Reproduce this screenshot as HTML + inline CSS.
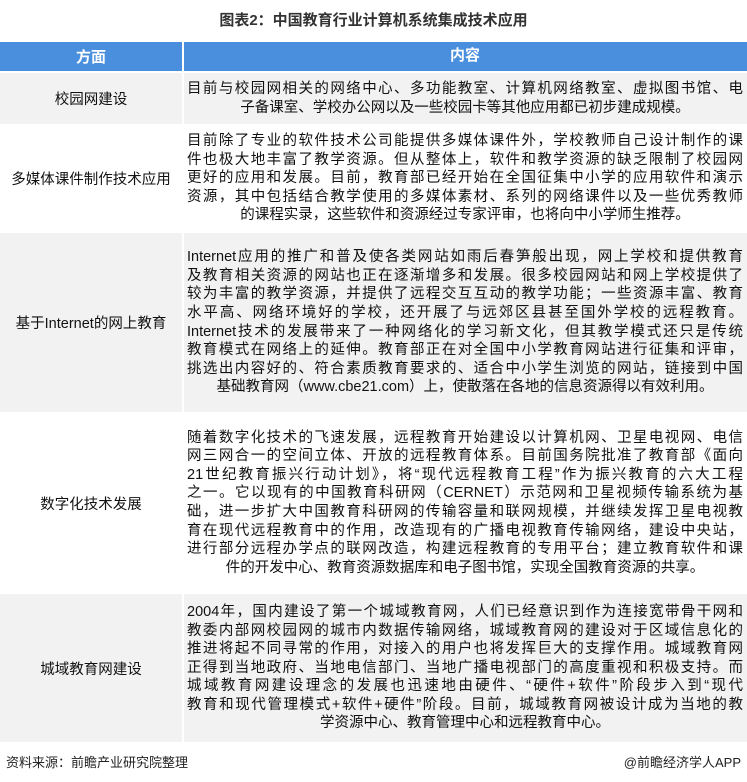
<!DOCTYPE html>
<html><head><meta charset="utf-8"><style>
*{margin:0;padding:0;box-sizing:border-box}
body{width:747px;height:782px;background:#fff;font-family:"Liberation Sans","Noto Sans CJK SC",sans-serif;color:#111;position:relative;overflow:hidden}
.title{position:absolute;top:9px;left:0;width:747px;text-align:center;font-size:15px;font-weight:bold;color:#333}
.row{position:absolute;left:0;width:747px;display:flex}
.l{width:182px;display:flex;align-items:center;justify-content:center;font-size:14.5px;text-align:center}
.r{position:absolute;left:184px;right:0;top:0;bottom:0;display:flex;flex-direction:column;justify-content:center;padding:0 4px 0 3px;font-size:14.5px;line-height:18.6px}
.r div{text-align:justify;text-align-last:justify;white-space:nowrap}
.r div.c{text-align:center;text-align-last:center}
.g .l,.g .r{background:#f2f2f2}
.hd .l,.hd .r{background:#4a8fdd;color:#fff;font-weight:bold;font-size:15px}
.hd .r{align-items:center}
.foot{position:absolute;top:752px;font-size:13px;color:#222}
</style></head><body>
<div class="title">图表2：中国教育行业计算机系统集成技术应用</div>

<div class="row hd" style="top:42px;height:29px"><div class="l">方面</div><div class="r">内容</div></div>

<div class="row g" style="top:73px;height:51px"><div class="l">校园网建设</div><div class="r">
<div>目前与校园网相关的网络中心、多功能教室、计算机网络教室、虚拟图书馆、电</div>
<div class="c">子备课室、学校办公网以及一些校园卡等其他应用都已初步建成规模。</div></div></div>

<div class="row" style="top:126px;height:105px"><div class="l">多媒体课件制作技术应用</div><div class="r">
<div>目前除了专业的软件技术公司能提供多媒体课件外，学校教师自己设计制作的课</div>
<div>件也极大地丰富了教学资源。但从整体上，软件和教学资源的缺乏限制了校园网</div>
<div>更好的应用和发展。目前，教育部已经开始在全国征集中小学的应用软件和演示</div>
<div>资源，其中包括结合教学使用的多媒体素材、系列的网络课件以及一些优秀教师</div>
<div class="c">的课程实录，这些软件和资源经过专家评审，也将向中小学师生推荐。</div></div></div>

<div class="row g" style="top:233px;height:179px"><div class="l">基于Internet的网上教育</div><div class="r">
<div>Internet应用的推广和普及使各类网站如雨后春笋般出现，网上学校和提供教育</div>
<div>及教育相关资源的网站也正在逐渐增多和发展。很多校园网站和网上学校提供了</div>
<div>较为丰富的教学资源，并提供了远程交互互动的教学功能；一些资源丰富、教育</div>
<div>水平高、网络环境好的学校，还开展了与远郊区县甚至国外学校的远程教育。</div>
<div>Internet技术的发展带来了一种网络化的学习新文化，但其教学模式还只是传统</div>
<div>教育模式在网络上的延伸。教育部正在对全国中小学教育网站进行征集和评审，</div>
<div>挑选出内容好的、符合素质教育要求的、适合中小学生浏览的网站，链接到中国</div>
<div class="c">基础教育网（www.cbe21.com）上，使散落在各地的信息资源得以有效利用。</div></div></div>

<div class="row" style="top:414px;height:178px"><div class="l">数字化技术发展</div><div class="r">
<div>随着数字化技术的飞速发展，远程教育开始建设以计算机网、卫星电视网、电信</div>
<div>网三网合一的空间立体、开放的远程教育体系。目前国务院批准了教育部《面向</div>
<div>21世纪教育振兴行动计划》，将“现代远程教育工程”作为振兴教育的六大工程</div>
<div>之一。它以现有的中国教育科研网（CERNET）示范网和卫星视频传输系统为基</div>
<div>础，进一步扩大中国教育科研网的传输容量和联网规模，并继续发挥卫星电视教</div>
<div>育在现代远程教育中的作用，改造现有的广播电视教育传输网络，建设中央站，</div>
<div>进行部分远程办学点的联网改造，构建远程教育的专用平台；建立教育软件和课</div>
<div class="c">件的开发中心、教育资源数据库和电子图书馆，实现全国教育资源的共享。</div></div></div>

<div class="row g" style="top:594px;height:148px"><div class="l">城域教育网建设</div><div class="r">
<div>2004年，国内建设了第一个城域教育网，人们已经意识到作为连接宽带骨干网和</div>
<div>教委内部网校园网的城市内数据传输网络，城域教育网的建设对于区域信息化的</div>
<div>推进将起不同寻常的作用，对接入的用户也将发挥巨大的支撑作用。城域教育网</div>
<div>正得到当地政府、当地电信部门、当地广播电视部门的高度重视和积极支持。而</div>
<div>城域教育网建设理念的发展也迅速地由硬件、“硬件+软件”阶段步入到“现代</div>
<div>教育和现代管理模式+软件+硬件”阶段。目前，城域教育网被设计成为当地的教</div>
<div class="c">学资源中心、教育管理中心和远程教育中心。</div></div></div>

<div class="foot" style="left:6px">资料来源：前瞻产业研究院整理</div>
<div class="foot" style="right:6px">@前瞻经济学人APP</div>
</body></html>
